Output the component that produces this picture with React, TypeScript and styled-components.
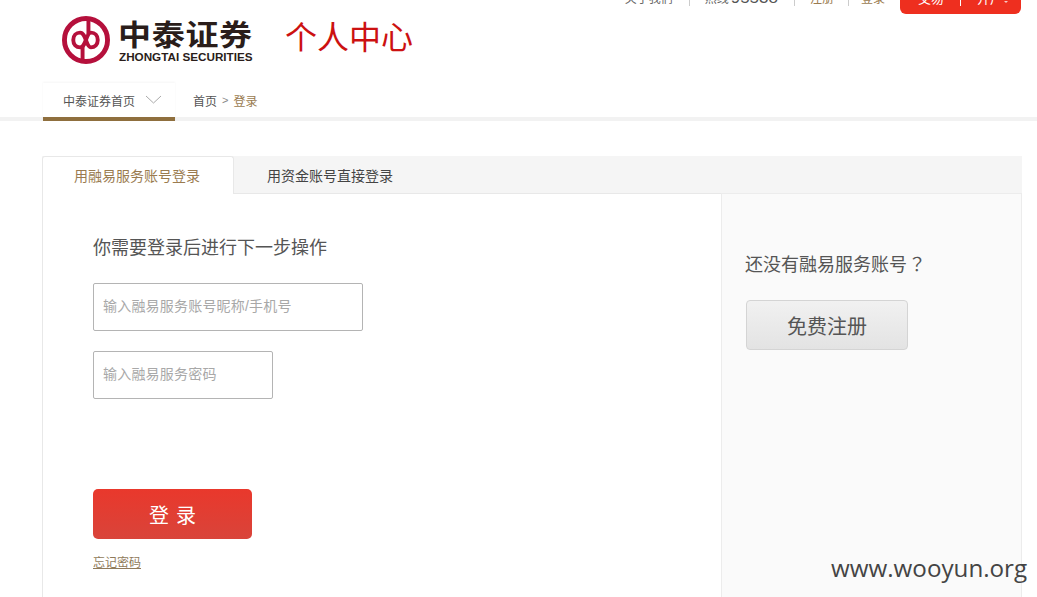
import React from "react";
import styled, { createGlobalStyle } from "styled-components";

const Global = createGlobalStyle`
  html, body { margin: 0; padding: 0; background: #fff; }
  body { font-family: "Liberation Sans", "Noto Sans CJK SC", sans-serif; overflow: hidden; }
  * { box-sizing: border-box; }
`;

const Page = styled.div`
  position: relative;
  width: 1037px;
  height: 597px;
  overflow: hidden;
`;

const TopLinks = styled.div`
  display: flex;
  justify-content: flex-end;
  align-items: flex-end;
  height: 14px;
  padding-right: 16px;
  overflow: hidden;
`;

const TopLink = styled.span<{ $tan?: boolean }>`
  font-size: 12px;
  line-height: 14px;
  margin-bottom: 8px;
  color: ${(p) => (p.$tan ? "#9a7b4f" : "#666")};
  white-space: nowrap;
`;

const TopDigits = styled.span`
  margin-left: 2px;
  font-size: 17px;
  color: #555;
`;

const TopSep = styled.i<{ $tight?: boolean }>`
  width: 1px;
  height: 12px;
  margin: 0 ${(p) => (p.$tight ? "12px" : "15px")} 8px ${(p) => (p.$tight ? "14px" : "16px")};
  background: #ccc;
`;

const TradeButton = styled.div`
  display: flex;
  justify-content: center;
  align-items: flex-end;
  gap: 16px;
  width: 121px;
  height: 24px;
  margin-left: 15px;
  padding-bottom: 8px;
  background: #ee2f1f;
  border-radius: 0 0 6px 6px;
  color: #fff;
  font-size: 13px;
  line-height: 14px;
`;

const TradeSep = styled.i`
  width: 1px;
  height: 12px;
  background: #fff;
`;

const TradeArrow = styled.span`
  position: relative;
  &::after {
    content: "";
    position: absolute;
    left: 100%;
    top: 9px;
    margin-left: 1px;
    border: 2px solid transparent;
    border-top-color: #f8c9c4;
  }
`;

const Brand = styled.div`
  display: flex;
  align-items: center;
  height: 49px;
  margin: 1px 0 0 62px;
`;

const LogoWords = styled.div`
  display: flex;
  flex-direction: column;
  margin-left: 9px;
  width: 134px;
`;

const LogoCn = styled.div`
  font-size: 33px;
  line-height: 33px;
  height: 33px;
  margin-left: -1px;
  font-weight: 700;
  letter-spacing: 0.7px;
  color: #2a1d1a;
  white-space: nowrap;
  transform: scaleY(0.88);
  transform-origin: bottom;
`;

const LogoEn = styled.div`
  font-size: 11.7px;
  line-height: 13px;
  font-weight: 700;
  color: #2a1d1a;
  white-space: nowrap;
`;

const CenterTitle = styled.div`
  margin: 0 0 4px 32px;
  font-size: 32px;
  line-height: 40px;
  color: #cc1111;
  white-space: nowrap;
`;

const NavBar = styled.div`
  display: flex;
  align-items: stretch;
  height: 38px;
  margin-top: 19px;
  padding-left: 43px;
  border-bottom: 4px solid #f2f2f2;
`;

const SiteTab = styled.div`
  display: flex;
  align-items: center;
  gap: 10px;
  width: 132px;
  height: 38px;
  padding: 0 0 0 20px;
  border-bottom: 4px solid #8f6f3e;
  box-shadow: 0 -1px 2px rgba(0, 0, 0, 0.04);
  font-size: 12px;
  color: #555;
`;

const Crumbs = styled.div`
  display: flex;
  align-items: center;
  gap: 5px;
  margin-left: 18px;
  font-size: 12px;
  color: #555;
`;

const CrumbCurrent = styled.span`
  color: #9a7b4f;
`;

const CrumbArrow = styled.span`
  color: #888;
  font-size: 11px;
`;

const Card = styled.div`
  width: 980px;
  margin: 35px 0 0 42px;
`;

const Tabs = styled.div`
  display: flex;
  height: 37px;
  background: #f5f5f5;
`;

const Tab = styled.div<{ $active?: boolean }>`
  position: relative;
  z-index: 1;
  display: flex;
  align-items: center;
  justify-content: center;
  width: 192px;
  height: ${(p) => (p.$active ? "38px" : "37px")};
  padding: 0 ${(p) => (p.$active ? "2px" : "0")} ${(p) => (p.$active ? "2px" : "0")} 0;
  font-size: 14px;
  color: ${(p) => (p.$active ? "#9a7b4f" : "#444")};
  background: ${(p) => (p.$active ? "#fff" : "transparent")};
  border: ${(p) => (p.$active ? "1px solid #e8e8e8" : "none")};
  border-bottom: none;
  border-radius: ${(p) => (p.$active ? "3px 3px 0 0" : "0")};
`;

const Body = styled.div`
  display: flex;
  height: 420px;
  border-left: 1px solid #e8e8e8;
`;

const LoginPane = styled.div`
  width: 678px;
  padding: 42px 0 0 50px;
  border-top: 1px solid #e8e8e8;
`;

const LoginTitle = styled.div`
  font-size: 18px;
  line-height: 24px;
  color: #555;
`;

const Field = styled.input<{ $w: number }>`
  display: block;
  width: ${(p) => p.$w}px;
  height: 48px;
  padding: 0 9px 2px;
  border: 1px solid #b4b4b4;
  border-radius: 2px;
  outline: none;
  background: #fff;
  font-family: inherit;
  font-size: 14px;
  letter-spacing: 0.2px;
  margin-bottom: 20px;
  &::placeholder { color: #a8a8a8; opacity: 1; }
`;

const Fields = styled.div`
  margin-top: 23px;
`;

const LoginButton = styled.div`
  display: flex;
  align-items: center;
  justify-content: center;
  width: 159px;
  height: 50px;
  margin-top: 90px;
  padding-left: 7px;
  border-radius: 5px;
  background: linear-gradient(#e9382c, #d9443a);
  color: #fff;
  font-size: 20px;
  letter-spacing: 7px;
`;

const Forgot = styled.a`
  display: inline-block;
  margin-top: 16px;
  font-size: 12px;
  line-height: 16px;
  color: #8f7a5a;
  text-decoration: underline;
`;

const SidePane = styled.div`
  width: 301px;
  padding: 58px 0 0 23px;
  background: #fafafa;
  border: 1px solid #ececec;
  border-bottom: none;
`;

const SideTitle = styled.div`
  font-size: 18px;
  line-height: 26px;
  color: #555;
`;

const CentredMark = styled.span`
  font-family: "Noto Sans CJK TC", sans-serif;
  line-height: 0;
  margin-left: 1px;
`;

const RegisterButton = styled.div`
  display: flex;
  align-items: center;
  justify-content: center;
  width: 162px;
  height: 50px;
  margin: 22px 0 0 1px;
  border: 1px solid #d4d4d4;
  border-radius: 4px;
  background: linear-gradient(#f1f1f1, #e3e3e3);
  font-size: 20px;
  color: #555;
`;

const Watermark = styled.div`
  position: absolute;
  left: 831px;
  top: 551px;
  font-family: "Open Sans", sans-serif;
  font-size: 24.2px;
  line-height: 33px;
  color: #444;
  white-space: nowrap;
`;

const Logo = () => (
  <svg width="48" height="48" viewBox="0 0 49 49" fill="none">
    <circle cx="24.5" cy="24.5" r="22" stroke="#b5103c" strokeWidth="5" />
    <path
      d="M11.5 24.5c0-4.500 3-7.500 7-7.500 6 0 6 15 11 15 4 0 7-3 7-7.500s-3-7.500-7-7.500c-5 0-5 15-11 15-4 0-7-3-7-7.500z"
      stroke="#b5103c"
      strokeWidth="4"
    />
    <path d="M27 3v16M21 30v16" stroke="#b5103c" strokeWidth="4" />
  </svg>
);

const Chevron = () => (
  <svg width="17" height="9" viewBox="0 0 17 9" fill="none" style={{ marginTop: -2 }}>
    <path d="M1 1l7.500 7L16 1" stroke="#aaa" strokeWidth="1" />
  </svg>
);

export default function App() {
  return (
    <Page>
      <Global />
      <TopLinks>
        <TopLink>关于我们</TopLink>
        <TopSep />
        <TopLink>
          热线<TopDigits>95538</TopDigits>
        </TopLink>
        <TopSep />
        <TopLink $tan>注册</TopLink>
        <TopSep $tight />
        <TopLink $tan>登录</TopLink>
        <TradeButton>
          <span>交易</span>
          <TradeSep />
          <TradeArrow>开户</TradeArrow>
        </TradeButton>
      </TopLinks>
      <Brand>
        <Logo />
        <LogoWords>
          <LogoCn>中泰证券</LogoCn>
          <LogoEn>ZHONGTAI SECURITIES</LogoEn>
        </LogoWords>
        <CenterTitle>个人中心</CenterTitle>
      </Brand>
      <NavBar>
        <SiteTab>
          中泰证券首页
          <Chevron />
        </SiteTab>
        <Crumbs>
          <span>首页</span>
          <CrumbArrow>&gt;</CrumbArrow>
          <CrumbCurrent>登录</CrumbCurrent>
        </Crumbs>
      </NavBar>
      <Card>
        <Tabs>
          <Tab $active>用融易服务账号登录</Tab>
          <Tab>用资金账号直接登录</Tab>
        </Tabs>
        <Body>
          <LoginPane>
            <LoginTitle>你需要登录后进行下一步操作</LoginTitle>
            <Fields>
              <Field $w={270} placeholder="输入融易服务账号昵称/手机号" readOnly />
              <Field $w={180} placeholder="输入融易服务密码" readOnly />
            </Fields>
            <LoginButton>登录</LoginButton>
            <Forgot>忘记密码</Forgot>
          </LoginPane>
          <SidePane>
            <SideTitle>
              还没有融易服务账号<CentredMark>？</CentredMark>
            </SideTitle>
            <RegisterButton>免费注册</RegisterButton>
          </SidePane>
        </Body>
      </Card>
      <Watermark>www.wooyun.org</Watermark>
    </Page>
  );
}
